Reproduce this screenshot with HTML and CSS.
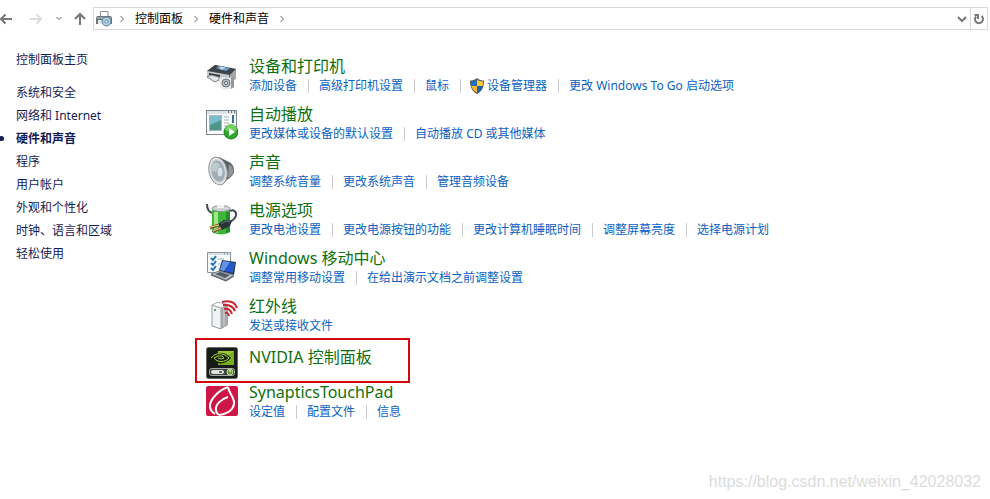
FILE: index.html
```html
<!DOCTYPE html>
<html lang="zh-CN">
<head>
    <meta charset="UTF-8">
    <meta name="viewport" content="width=device-width, initial-scale=1.0">
    <title>硬件和声音</title>
    <link rel="stylesheet" href="styles.css">
</head>
<body>
    <header class="toolbar">
        <button type="button" class="nav-btn back" aria-label="后退">
            <svg width="14" height="14" viewBox="0 0 14 14"><path d="M12 7H1M5.500 2.500L1 7L5.500 11.500"/></svg>
        </button>
        <button type="button" class="nav-btn forward" aria-label="前进">
            <svg width="14" height="14" viewBox="0 0 14 14"><path d="M1 7H12M7.500 2.500L12 7L7.500 11.500"/></svg>
        </button>
        <button type="button" class="nav-btn recent" aria-label="最近浏览的位置">
            <svg width="8" height="14" viewBox="0 0 8 14"><path d="M1.500 5L4 7.500L6.500 5"/></svg>
        </button>
        <button type="button" class="nav-btn up" aria-label="上移">
            <svg width="14" height="14" viewBox="0 0 14 14"><path d="M7 13V2M2 7L7 2L12 7"/></svg>
        </button>
        <div class="address">
            <svg class="address-icon" width="16" height="16" viewBox="0 0 16 16">
                <path d="M4.500 6V.500H12V6" fill="#fff" stroke="#8a9096"/>
                <path d="M1 5h14l1 2v6H0V7z" fill="#6c757d"/>
                <path d="M1 6h14v2H1z" fill="#98a1a8"/>
                <path d="M2 9h5v4H2z" fill="#e8ecef"/>
                <circle cx="10.500" cy="10.500" r="4.500" fill="#a9cbe0" stroke="#5d7f96"/>
                <circle cx="10.500" cy="10.500" r="1.500" fill="#fff" stroke="#5b8fb5"/>
            </svg>
            <nav class="crumbs">
                <svg width="6" height="10" viewBox="0 0 6 10"><path d="M1.500 2L4.500 5L1.500 8"/></svg>
                <a href="#">控制面板</a>
                <svg width="6" height="10" viewBox="0 0 6 10"><path d="M1.500 2L4.500 5L1.500 8"/></svg>
                <a href="#">硬件和声音</a>
                <svg width="6" height="10" viewBox="0 0 6 10"><path d="M1.500 2L4.500 5L1.500 8"/></svg>
            </nav>
            <button type="button" class="drop" aria-label="以前的位置">
                <svg width="12" height="12" viewBox="0 0 12 12"><path d="M2 4L6 8L10 4"/></svg>
            </button>
            <button type="button" class="refresh" aria-label="刷新">
                <svg width="12" height="12" viewBox="0 0 12 12"><path d="M8.500 3A4 4 0 1 1 3 3.500M1.500 2H5V6"/></svg>
            </button>
        </div>
    </header>

    <div class="content">
        <nav class="sidebar">
            <a href="#" class="home">控制面板主页</a>
            <ul>
                <li><a href="#">系统和安全</a></li>
                <li><a href="#">网络和 Internet</a></li>
                <li class="active"><a href="#">硬件和声音</a></li>
                <li><a href="#">程序</a></li>
                <li><a href="#">用户帐户</a></li>
                <li><a href="#">外观和个性化</a></li>
                <li><a href="#">时钟、语言和区域</a></li>
                <li><a href="#">轻松使用</a></li>
            </ul>
        </nav>

        <main class="category-list">
            <section class="category">
                <!-- 打印机 -->
                <svg class="icon" width="32" height="32" viewBox="0 0 32 32">
                    <path d="M1 11L9 5L30 9L29 19L20 22L2 17z" fill="#777b80"/>
                    <path d="M1 11L9 5L30 9L24 15z" fill="#3e444b"/>
                    <path d="M10 8L13 6L24 8L20 11z" fill="#6fa3c4"/>
                    <path d="M13 8.500L15 6.500L19 7.500L16 10z" fill="#b8d8e8"/>
                    <path d="M24 15L30 9V19L24 22z" fill="#a3a6aa"/>
                    <path d="M1 11L23 15V21L1 16z" fill="#c5c8cb"/>
                    <path d="M3 13L14 15V17L3 15z" fill="#2f3439"/>
                    <path d="M1 17L5 15L13 17V20L9 22z" fill="#e5e7e9" stroke="#777b80"/>
                    <path d="M13 19L16 17L28 18V28L18 30L14 27z" fill="#e6e8ea"/>
                    <circle cx="20" cy="23" r="4" fill="#b4b9bd" stroke="#72787d"/>
                    <circle cx="20" cy="23" r="1.500" fill="#fff" stroke="#61676b"/>
                    <path d="M25 18L28 17V27L25 29z" fill="#92979b"/>
                </svg>
                <div class="info">
                    <h2><a href="#">设备和打印机</a></h2>
                    <ul class="tasks">
                        <li><a href="#">添加设备</a></li>
                        <li><a href="#">高级打印机设置</a></li>
                        <li><a href="#">鼠标</a></li>
                        <li class="admin">
                            <svg width="16" height="16" viewBox="0 0 16 16">
                                <path d="M8 0C6 2 3 2.500 1 2.500C1 9 3 13.500 8 16C13 13.500 15 9 15 2.500C13 2.500 10 2 8 0z" fill="#4c5560"/>
                                <path d="M7.500 1.800V8H2.300C2 6.500 2 5 2 3.500C4.500 3.300 6 2.800 7.500 1.800z" fill="#1976c8"/>
                                <path d="M8 1.500C10 3 12 3.400 14 3.500C14 5 14 6.500 13.600 8H8z" fill="#fcc438"/>
                                <path d="M2.300 8H8V14.800C5 13.200 3 11 2.300 8z" fill="#fcb72c"/>
                                <path d="M8 8H13.600C13 11 11 13.200 8 14.800z" fill="#1466b8"/>
                            </svg>
                            <a href="#">设备管理器</a>
                        </li>
                        <li><a href="#">更改 Windows To Go 启动选项</a></li>
                    </ul>
                </div>
            </section>

            <section class="category">
                <!-- 自动播放 -->
                <svg class="icon" width="32" height="32" viewBox="0 0 32 32">
                    <rect x=".5" y="2.500" width="30" height="24" fill="#fafcfd" stroke="#7e878e"/>
                    <path d="M1 3h29v3H1z" fill="#dce2e6"/>
                    <path d="M22 4h1M25 4h1M28 4h1" stroke="#67727a" stroke-width="2"/>
                    <rect x="3.500" y="7.500" width="12" height="15" fill="#5b9fbd" stroke="#a7b7bf"/>
                    <path d="M4 8h11v6L4 20z" fill="#7bbdce"/>
                    <path d="M4 17L15 12V22H4z" fill="#50958b"/>
                    <path d="M18 9h5M18 12h5M18 15h5M18 18h3" stroke="#a9b1b6"/>
                    <path d="M27 7v8" stroke="#33719a" stroke-width="2"/>
                    <circle cx="25" cy="24" r="7" fill="#2da72e" stroke="#188519"/>
                    <path d="M19 22A6 6 0 0 1 31 22Q25 25 19 22z" fill="#75cf60"/>
                    <path d="M23 20L29 24L23 28z" fill="#fff"/>
                </svg>
                <div class="info">
                    <h2><a href="#">自动播放</a></h2>
                    <ul class="tasks">
                        <li><a href="#">更改媒体或设备的默认设置</a></li>
                        <li><a href="#">自动播放 CD 或其他媒体</a></li>
                    </ul>
                </div>
            </section>

            <section class="category">
                <!-- 扬声器 -->
                <svg class="icon" width="32" height="32" viewBox="0 0 32 32">
                    <path d="M13 1L21 5Q29 8 28 16Q27 20 21 24L15 29z" fill="#5e6164"/>
                    <path d="M23 8Q28 11 27 16Q26 20 22 22z" fill="#929699"/>
                    <ellipse cx="12" cy="15" rx="9" ry="14" fill="#e2e4e6" stroke="#8e9396" transform="rotate(-12 12 15)"/>
                    <ellipse cx="12" cy="15" rx="7" ry="11" fill="#a0abb3" stroke="#c3c9cd" transform="rotate(-12 12 15)"/>
                    <path d="M6 8Q11 4 15 11L12 16L5 15z" fill="#bec8cf"/>
                    <ellipse cx="14" cy="16" rx="3" ry="5" fill="#d5e0e8" stroke="#a3afb8"/>
                </svg>
                <div class="info">
                    <h2><a href="#">声音</a></h2>
                    <ul class="tasks">
                        <li><a href="#">调整系统音量</a></li>
                        <li><a href="#">更改系统声音</a></li>
                        <li><a href="#">管理音频设备</a></li>
                    </ul>
                </div>
            </section>

            <section class="category">
                <!-- 电池和插头 -->
                <svg class="icon" width="32" height="32" viewBox="0 0 32 32">
                    <path d="M1 0Q1 8 7 9" fill="none" stroke="#414952" stroke-width="2"/>
                    <path d="M6 5Q15 1 24 5V28Q15 33 6 28z" fill="#3fb53a"/>
                    <path d="M8 8h4v21l-4-1z" fill="#a3e68f"/>
                    <path d="M20 8h4v20l-4 1z" fill="#268c29"/>
                    <ellipse cx="15" cy="4.500" rx="9" ry="3" fill="#cfd4d7" stroke="#8c9499"/>
                    <path d="M11 1h7v3h-7z" fill="#eff1f2"/>
                    <path d="M23 18Q31 15 30 9Q28 5 24 7" fill="none" stroke="#414952" stroke-width="2"/>
                    <path d="M12 20L18 16L26 17L24 22L16 26z" fill="#293139"/>
                    <path d="M15 20L20 17L24 18" fill="none" stroke="#65717b"/>
                    <path d="M13 21L4 24M15 24L7 28" stroke="#756334" stroke-width="3"/>
                    <path d="M13 21L4 23M15 24L7 27" stroke="#edcf82"/>
                </svg>
                <div class="info">
                    <h2><a href="#">电源选项</a></h2>
                    <ul class="tasks">
                        <li><a href="#">更改电池设置</a></li>
                        <li><a href="#">更改电源按钮的功能</a></li>
                        <li><a href="#">更改计算机睡眠时间</a></li>
                        <li><a href="#">调整屏幕亮度</a></li>
                        <li><a href="#">选择电源计划</a></li>
                    </ul>
                </div>
            </section>

            <section class="category">
                <!-- 笔记本电脑 -->
                <svg class="icon" width="32" height="32" viewBox="0 0 32 32">
                    <path d="M1.500.500h23v20h-23z" fill="#fbfcfd" stroke="#8a949d"/>
                    <path d="M2 1h22v2H2z" fill="#dae1e7"/>
                    <path d="M18 2h1M21 2h1" stroke="#586875"/>
                    <path d="M5 6L7 8L10 4M5 11L7 13L10 9M5 16L7 18L10 14" fill="none" stroke="#2475b6" stroke-width="2"/>
                    <path d="M12 7h6M12 12h3M12 17h2" stroke="#a1adb5"/>
                    <path d="M16 8L30 10L28 23L13 19z" fill="#25364c"/>
                    <path d="M17 9L29 11L27 21L14 18z" fill="#2158cb"/>
                    <path d="M17 9L24 10L18 19L14 18z" fill="#6593e8"/>
                    <path d="M5 22L13 19L28 23L20 28z" fill="#bdc4cb" stroke="#747d86"/>
                    <path d="M9 22L14 20L24 23L19 26z" fill="#515b65"/>
                    <path d="M5 23L20 29L28 24" fill="none" stroke="#434c55"/>
                </svg>
                <div class="info">
                    <h2><a href="#">Windows 移动中心</a></h2>
                    <ul class="tasks">
                        <li><a href="#">调整常用移动设置</a></li>
                        <li><a href="#">在给出演示文档之前调整设置</a></li>
                    </ul>
                </div>
            </section>

            <section class="category">
                <!-- 红外线 -->
                <svg class="icon" width="32" height="32" viewBox="0 0 32 32">
                    <path d="M6 5L12 2L22 5V25L15 29L6 26z" fill="#8f9296"/>
                    <path d="M6 5L15 8V29L6 26z" fill="#f1f2f3" stroke="#9a9da0"/>
                    <path d="M6 5L12 2L22 5L15 8z" fill="#fafafa" stroke="#aaadb0"/>
                    <path d="M15 8L22 5V25L15 29z" fill="#a6a9ac"/>
                    <path d="M18 8v18" stroke="#d6d8da"/>
                    <circle cx="9" cy="10" r="1" fill="#388d39"/>
                    <path d="M19 13Q22 12 23 16M18 9Q24 8 26 14M17 5Q26 4 29 11M16 2Q28-1 31 8" fill="none" stroke="#c62632" stroke-width="2"/>
                </svg>
                <div class="info">
                    <h2><a href="#">红外线</a></h2>
                    <ul class="tasks">
                        <li><a href="#">发送或接收文件</a></li>
                    </ul>
                </div>
            </section>

            <section class="category marked">
                <!-- NVIDIA -->
                <svg class="icon" width="32" height="32" viewBox="0 0 32 32">
                    <rect x=".5" y=".5" width="31" height="31" rx="2" fill="#171c18" stroke="#646965"/>
                    <path d="M12 4H28V18H12z" fill="#78ad20"/>
                    <path d="M12 4H28L12 14z" fill="#9bc93c"/>
                    <path d="M4 11Q10 3 20 7Q23 9 25 11Q19 18 11 16Q6 15 4 11z" fill="#172109"/>
                    <path d="M5 11Q11 4 19 8Q22 10 23 11Q18 16 12 14Q9 13 8 11Q12 8 16 9L18 11Q15 13 12 11" fill="none" stroke="#a4d642"/>
                    <rect x="3.500" y="21.500" width="25" height="7" rx="2" fill="#3d423e" stroke="#a7aaa7"/>
                    <rect x="5" y="23" width="13" height="4" rx="2" fill="#e1e3e1"/>
                    <path d="M13 24h3v2h-3z" fill="#676c68"/>
                    <circle cx="24" cy="25" r="3" fill="#6a9b33" stroke="#c3dca4"/>
                    <path d="M24 23v2" stroke="#fff"/>
                </svg>
                <div class="info">
                    <h2><a href="#">NVIDIA 控制面板</a></h2>
                </div>
            </section>

            <section class="category">
                <!-- Synaptics -->
                <svg class="icon" width="32" height="32" viewBox="0 0 32 32">
                    <rect width="32" height="30" rx="2" fill="#cd1747"/>
                    <path d="M22 1C13 4 4 13 4 20Q4 25 9 28" fill="none" stroke="#fff" stroke-width="2"/>
                    <path d="M22 1C23 8 29 12 28 18C27 24 21 28 13 29" fill="none" stroke="#fff" stroke-width="2"/>
                    <path d="M22 11C15 13 9 19 10 24Q10 27 13 29" fill="none" stroke="#fff" stroke-width="2"/>
                </svg>
                <div class="info">
                    <h2><a href="#">SynapticsTouchPad</a></h2>
                    <ul class="tasks">
                        <li><a href="#">设定值</a></li>
                        <li><a href="#">配置文件</a></li>
                        <li><a href="#">信息</a></li>
                    </ul>
                </div>
            </section>
        </main>
    </div>

    <div class="watermark">https://blog.csdn.net/weixin_42028032</div>
</body>
</html>
```
FILE: styles.css
```css
*,
*::before,
*::after {
    box-sizing: border-box;
}
body {
    margin: 0;
    min-height: 100vh;
    display: flex;
    flex-direction: column;
    background-color: #fff;
    font-family: 'Noto Sans', 'Noto Sans CJK SC', sans-serif;
    font-size: 12px;
    line-height: 18px;
}
a {
    text-decoration: none;
}
ul {
    list-style: none;
    margin: 0;
    padding: 0;
}
button {
    display: flex;
    align-items: center;
    justify-content: center;
    padding: 0;
    border: 0;
    background: none;
}
svg {
    display: block;
    flex: none;
}

/* 地址栏 */
.toolbar {
    display: flex;
    align-items: center;
    padding: 7px 2px 0 0;
}
.toolbar button path,
.crumbs path {
    fill: none;
    stroke: #777;
    stroke-width: 2;
}
.nav-btn {
    height: 23px;
}
.back {
    margin-right: 15px;
}
.toolbar .forward path {
    stroke: #dcdcdc;
}
.recent {
    margin: 0 10px 0 12px;
}
.up {
    margin-right: 6px;
}
.toolbar .recent path,
.crumbs path {
    stroke: #666;
    stroke-width: 1;
}
.address {
    flex: 1;
    display: flex;
    align-items: center;
    height: 23px;
    padding-left: 2px;
    border: 1px solid #d9d9d9;
}
.crumbs {
    flex: 1;
    display: flex;
    align-items: center;
    gap: 10px;
    padding-left: 7px;
}
.crumbs a {
    color: #000;
}
.drop {
    width: 16px;
}
.refresh {
    width: 17px;
    height: 21px;
    border-left: 1px solid #d9d9d9;
}

.content {
    flex: 1;
    display: flex;
    padding-top: 20px;
}

/* 左侧导航 */
.sidebar {
    width: 190px;
    flex: none;
    padding-left: 16px;
    line-height: 23px;
}
.sidebar a {
    color: #151c55;
}
.sidebar .home {
    display: block;
    margin: -2px 0 10px;
}
.sidebar .active {
    position: relative;
    font-weight: bold;
}
.sidebar .active::before {
    content: '';
    position: absolute;
    top: 9px;
    left: -17px;
    width: 5px;
    height: 5px;
    border-radius: 50%;
    background-color: #151c55;
}

/* 分类列表 */
.category-list {
    flex: 1;
    padding: 6px 16px 0;
}
.category {
    display: flex;
    gap: 11px;
    margin-bottom: 9px;
}
.icon {
    margin-top: 4px;
}
.category h2 {
    margin: 0;
    font-size: 16px;
    font-weight: normal;
    line-height: 20px;
}
.category h2 a {
    color: #0f700f;
}
.tasks {
    display: flex;
    flex-wrap: wrap;
    padding-top: 1px;
}
.tasks li {
    display: flex;
    align-items: center;
}
.tasks li + li::before {
    content: '';
    width: 1px;
    height: 14px;
    margin: 0 10px 0 11px;
    background-color: #ccc;
}
.tasks .admin + li::before,
.tasks .admin::before {
    flex: none;
}
.tasks li.admin::before {
    margin-right: 8px;
}
.tasks a {
    color: #0b62c4;
}
.tasks .admin svg {
    margin-right: 2px;
}
/* 红框标出的项目 */
.marked {
    position: relative;
    min-height: 38px;
    margin-bottom: 0;
}
.marked .icon,
.marked h2 {
    margin-top: 3px;
}
.marked::after {
    content: '';
    position: absolute;
    top: -6px;
    left: -11px;
    width: 215px;
    height: 45px;
    border: 2px solid #d4070c;
    pointer-events: none;
}

.watermark {
    align-self: flex-end;
    padding: 0 9px 8px 0;
    font-family: 'Liberation Sans', Arial, sans-serif;
    font-size: 16px;
    color: #dcdcdc;
}
```
